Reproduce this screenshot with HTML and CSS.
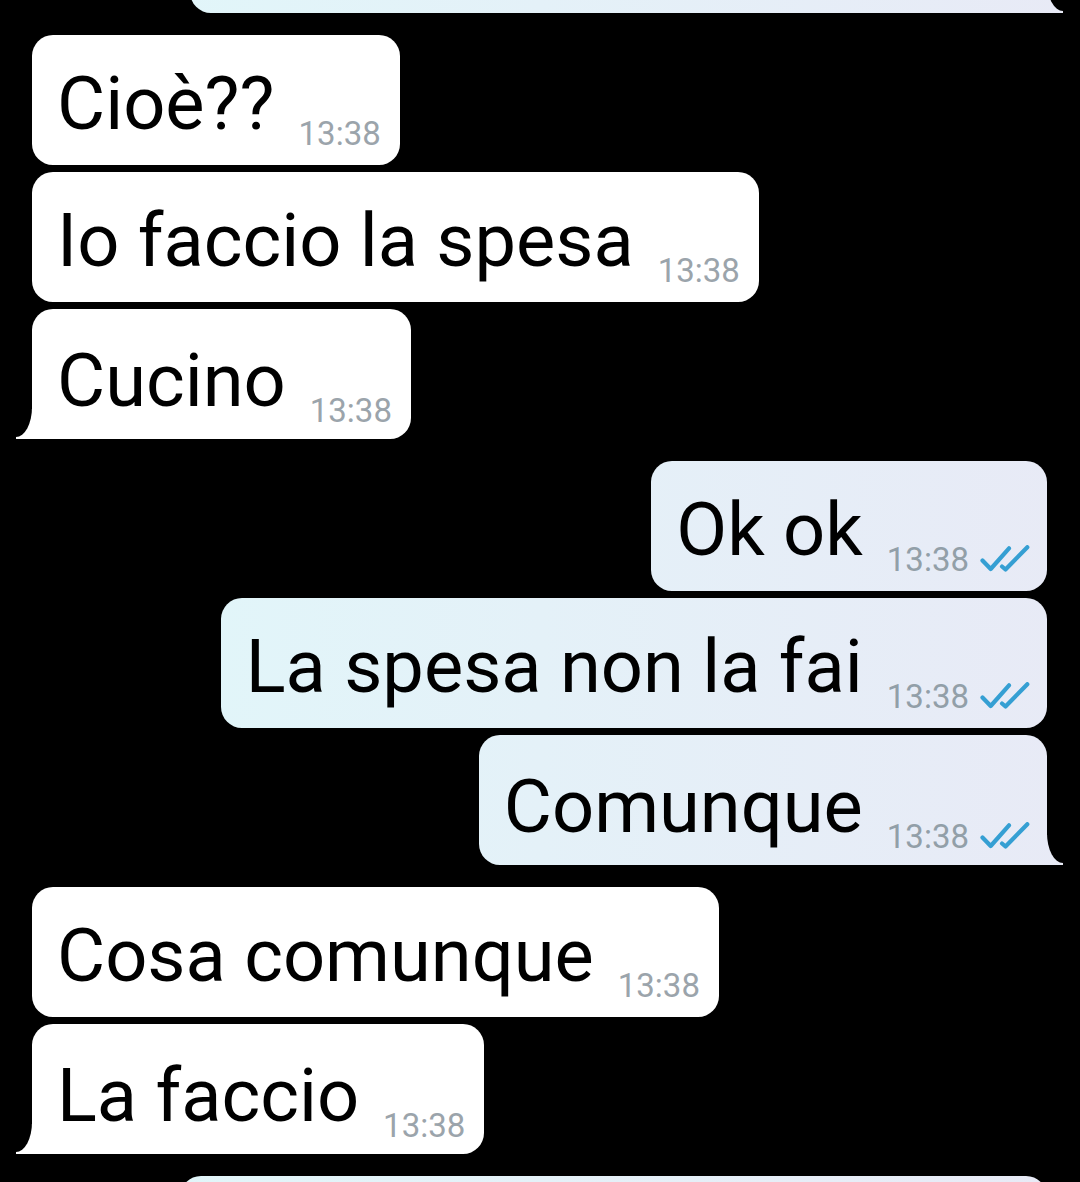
FILE: index.html
```html
<!DOCTYPE html>
<html lang="it">
<head>
    <meta charset="UTF-8">
    <meta name="viewport" content="width=device-width, initial-scale=1.0">
    <title>Chat</title>
    <link rel="stylesheet" href="styles.css">
</head>
<body>
    <div class="chat">
        <div class="msg out tail prev"></div>

        <div class="msg in first"><span class="text">Cioè??</span><span class="time">13:38</span></div>
        <div class="msg in"><span class="text">Io faccio la spesa</span><span class="time">13:38</span></div>
        <div class="msg in tail"><span class="text">Cucino</span><span class="time">13:38</span></div>

        <div class="msg out first"><span class="text">Ok ok</span><span class="time">13:38<svg class="ticks" viewBox="0 0 50 27"><path d="M2.5 15.5 L10.7 24 L29 3.3 M22 21.5 L25.5 24.5 L47.3 2.2"/></svg></span></div>
        <div class="msg out"><span class="text">La spesa non la fai</span><span class="time">13:38<svg class="ticks" viewBox="0 0 50 27"><path d="M2.5 15.5 L10.7 24 L29 3.3 M22 21.5 L25.5 24.5 L47.3 2.2"/></svg></span></div>
        <div class="msg out tail"><span class="text">Comunque</span><span class="time">13:38<svg class="ticks" viewBox="0 0 50 27"><path d="M2.5 15.5 L10.7 24 L29 3.3 M22 21.5 L25.5 24.5 L47.3 2.2"/></svg></span></div>

        <div class="msg in first"><span class="text">Cosa comunque</span><span class="time">13:38</span></div>
        <div class="msg in tail"><span class="text">La faccio</span><span class="time">13:38</span></div>

        <div class="msg out first next"></div>
    </div>
</body>
</html>
```

FILE: styles.css
```css
html, body {
    margin: 0;
    padding: 0;
    background-color: #000;
    height: 100%;
    overflow: hidden;
}

body {
    font-family: Roboto, "Liberation Sans", sans-serif;
    color: #000;
}

.chat {
    display: flex;
    flex-direction: column;
    gap: 7px;
    margin-top: -117px;
}

.msg {
    position: relative;
    box-sizing: border-box;
    height: 130px;
    padding: 27px 19px 19px 25px;
    border-radius: 21px;
    line-height: 84px;
    white-space: nowrap;
}

.msg.first {
    margin-top: 15px;
}

.msg.in {
    align-self: flex-start;
    margin-left: 32px;
    background-color: #fff;
}

.msg.out {
    align-self: flex-end;
    margin-right: 33px;
    padding-right: 17px;
    background: linear-gradient(90deg, #e0f8fa 0%, #e4f1f8 50%, #e8eaf6 100%) fixed;
}

.msg.tail {
    padding-top: 30px;
    padding-bottom: 16px;
}

.msg.in.tail {
    border-bottom-left-radius: 0;
}

.msg.out.tail {
    border-bottom-right-radius: 0;
}

/* little curled tails on the last bubble of a group */
.msg.tail::before,
.msg.tail::after {
    content: "";
    position: absolute;
    bottom: 0;
}

.msg.in.tail::before {
    left: -16px;
    width: 20px;
    height: 30px;
    background-color: #fff;
}

.msg.in.tail::after {
    left: -40px;
    bottom: 2px;
    width: 40px;
    height: 36px;
    background-color: #000;
    border-bottom-right-radius: 16px 30px;
}

.msg.out.tail::before {
    right: -16px;
    width: 20px;
    height: 30px;
    background: linear-gradient(90deg, #e0f8fa 0%, #e4f1f8 50%, #e8eaf6 100%) fixed;
}

.msg.out.tail::after {
    right: -40px;
    bottom: 2px;
    width: 40px;
    height: 36px;
    background-color: #000;
    border-bottom-left-radius: 16px 30px;
}

.msg.prev {
    width: 857px;
}

.msg.next {
    width: 867px;
}

.text {
    font-size: 74px;
}

.time {
    display: inline-block;
    margin-left: 24px;
    font-size: 33px;
    line-height: 20px;
    color: #9ba4ab;
    vertical-align: -16px;
}

.out .time {
    color: #929fa8;
}

.ticks {
    width: 50px;
    height: 27px;
    margin-left: 11px;
    vertical-align: -1px;
    fill: none;
    stroke: #359fd3;
    stroke-width: 4.2;
    stroke-linecap: round;
    stroke-linejoin: round;
}
```
